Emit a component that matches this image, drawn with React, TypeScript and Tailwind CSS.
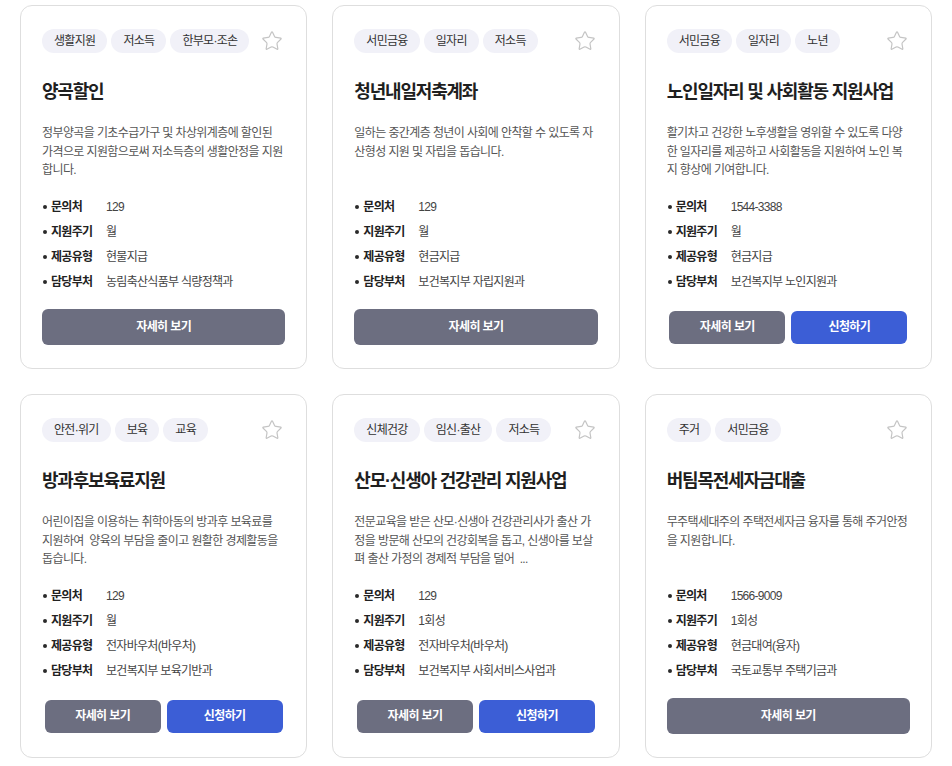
import { Star } from "lucide-react";

type Benefit = {
  tags: string[];
  title: string;
  desc: string;
  phone: string;
  cycle: string;
  kind: string;
  dept: string;
  apply: boolean;
};

const benefits: Benefit[] = [
  {
    tags: ["생활지원", "저소득", "한부모·조손"],
    title: "양곡할인",
    desc: "정부양곡을 기초수급가구 및 차상위계층에 할인된 가격으로 지원함으로써 저소득층의 생활안정을 지원합니다.",
    phone: "129",
    cycle: "월",
    kind: "현물지급",
    dept: "농림축산식품부 식량정책과",
    apply: false,
  },
  {
    tags: ["서민금융", "일자리", "저소득"],
    title: "청년내일저축계좌",
    desc: "일하는 중간계층 청년이 사회에 안착할 수 있도록 자산형성 지원 및 자립을 돕습니다.",
    phone: "129",
    cycle: "월",
    kind: "현금지급",
    dept: "보건복지부 자립지원과",
    apply: false,
  },
  {
    tags: ["서민금융", "일자리", "노년"],
    title: "노인일자리 및 사회활동 지원사업",
    desc: "활기차고 건강한 노후생활을 영위할 수 있도록 다양한 일자리를 제공하고 사회활동을 지원하여 노인 복지 향상에 기여합니다.",
    phone: "1544-3388",
    cycle: "월",
    kind: "현금지급",
    dept: "보건복지부 노인지원과",
    apply: true,
  },
  {
    tags: ["안전·위기", "보육", "교육"],
    title: "방과후보육료지원",
    desc: "어린이집을 이용하는 취학아동의 방과후 보육료를 지원하여\u00a0 양육의 부담을 줄이고 원활한 경제활동을 돕습니다.",
    phone: "129",
    cycle: "월",
    kind: "전자바우처(바우처)",
    dept: "보건복지부 보육기반과",
    apply: true,
  },
  {
    tags: ["신체건강", "임신·출산", "저소득"],
    title: "산모·신생아 건강관리 지원사업",
    desc: "전문교육을 받은 산모·신생아 건강관리사가 출산 가정을 방문해 산모의 건강회복을 돕고, 신생아를 보살펴 출산 가정의 경제적 부담을 덜어\u00a0 ...",
    phone: "129",
    cycle: "1회성",
    kind: "전자바우처(바우처)",
    dept: "보건복지부 사회서비스사업과",
    apply: true,
  },
  {
    tags: ["주거", "서민금융"],
    title: "버팀목전세자금대출",
    desc: "무주택세대주의 주택전세자금 융자를 통해 주거안정을 지원합니다.",
    phone: "1566-9009",
    cycle: "1회성",
    kind: "현금대여(융자)",
    dept: "국토교통부 주택기금과",
    apply: false,
  },
];

function InfoRow({ label, value }: { label: string; value: string }) {
  return (
    <li className="flex items-center h-[25px]">
      <span className="w-[4px] h-[4px] rounded-full bg-[#2a2a2a] ml-[1px] mr-[4px]" />
      <span className="w-[55px] font-bold text-[#222]">{label}</span>
      <span className="text-[#444]">{value}</span>
    </li>
  );
}

function BenefitCard({ item }: { item: Benefit }) {
  return (
    <div className="bg-white border border-[#dedede] rounded-[12px] px-[21px] pt-[23px] pb-[23px]">
      <div className="flex items-center justify-between">
        <div className="flex gap-[4px]">
          {item.tags.map((t) => (
            <span
              key={t}
              className="h-[24px] px-[12px] flex items-center shrink-0 whitespace-nowrap rounded-full bg-[#f1f1f8] text-[12px] tracking-[-0.7px] text-[#333]"
            >
              {t}
            </span>
          ))}
        </div>
        <Star size={22} strokeWidth={1.3} className="text-[#c4c4c4] mr-[2px] shrink-0" />
      </div>

      <h3 className="mt-[26px] text-[18px] leading-[26px] tracking-[-1.2px] font-bold text-[#1f1f1f] whitespace-nowrap">
        {item.title}
      </h3>

      <p className="mt-[19px] w-[242px] h-[56px] text-[12px] leading-[18.5px] tracking-[-0.6px] text-[#555] line-clamp-3">
        {item.desc}
      </p>

      <ul className="mt-[14px] text-[12px] tracking-[-0.7px]">
        <InfoRow label="문의처" value={item.phone} />
        <InfoRow label="지원주기" value={item.cycle} />
        <InfoRow label="제공유형" value={item.kind} />
        <InfoRow label="담당부처" value={item.dept} />
      </ul>

      <div className="mt-[15px] h-[36px] flex items-center justify-center gap-[6px]">
        {item.apply ? (
          <>
            <button className="w-[116px] h-[33px] rounded-[6px] bg-[#6c6e80] text-white text-[12px] tracking-[-0.6px] font-bold">
              자세히 보기
            </button>
            <button className="w-[116px] h-[33px] rounded-[6px] bg-[#3c5ed6] text-white text-[12px] tracking-[-0.6px] font-bold">
              신청하기
            </button>
          </>
        ) : (
          <button className="w-full h-[36px] rounded-[6px] bg-[#6c6e80] text-white text-[12px] tracking-[-0.6px] font-bold">
            자세히 보기
          </button>
        )}
      </div>
    </div>
  );
}

export default function App() {
  return (
    <div
      className="min-h-screen bg-white px-5 pt-[5px]"
      style={{ fontFamily: '"Liberation Sans", "Noto Sans CJK KR", sans-serif' }}
    >
      <div className="grid grid-cols-3 gap-x-[25px] gap-y-[25px]">
        {benefits.map((b) => (
          <BenefitCard key={b.title} item={b} />
        ))}
      </div>
    </div>
  );
}
